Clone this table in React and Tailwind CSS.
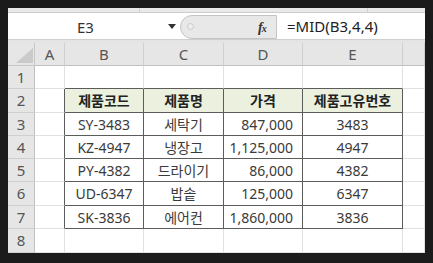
const cols = [
  { key: "A", w: "w-[30px]" },
  { key: "B", w: "w-[79px]" },
  { key: "C", w: "w-[80px]" },
  { key: "D", w: "w-[79px]" },
  { key: "E", w: "w-[100px]" },
  { key: "F", w: "w-[22px]" },
];

const rowH = ["h-[23px]", "h-[24px]", "h-[23px]", "h-[23px]", "h-[23px]", "h-[24px]", "h-[23px]", "h-[24px]"];

const data = [
  ["제품코드", "제품명", "가격", "제품고유번호"],
  ["SY-3483", "세탁기", "847,000", "3483"],
  ["KZ-4947", "냉장고", "1,125,000", "4947"],
  ["PY-4382", "드라이기", "86,000", "4382"],
  ["UD-6347", "밥솥", "125,000", "6347"],
  ["SK-3836", "에어컨", "1,860,000", "3836"],
];

function Cell({ r, c, w }) {
  // r: 1..8, c: 0..5 (A..F)
  const inTable = r >= 2 && r <= 7 && c >= 1 && c <= 4;
  const value = inTable ? data[r - 2][c - 1] : "";
  const head = r === 2 && inTable;

  let right = "border-r-[#e1e1e1]";
  let bottom = "border-b-[#e1e1e1]";
  if (inTable) {
    right = "border-r-[#5c5c5c]";
    bottom = "border-b-[#5c5c5c]";
  }
  if (c === 0 && r >= 2 && r <= 7) right = "border-r-[#5c5c5c]";
  if (r === 1 && c >= 1 && c <= 4) bottom = "border-b-[#5c5c5c]";

  const align = c === 3 && !head ? "justify-end pr-[9px]" : "justify-center";

  return (
    <div
      className={`${w} h-full shrink-0 flex items-center border-r border-b ${right} ${bottom} ${align} ${
        head ? "bg-[#ebf1de] font-bold text-[#222]" : "text-[#3a3a3a]"
      }`}
    >
      {value}
    </div>
  );
}

export default function App() {
  return (
    <div className="w-[433px] h-[263px] bg-[#1b1b1b] pt-[8px] pl-[8px] overflow-hidden font-['Noto_Sans','Noto_Sans_CJK_KR',sans-serif]">
      <div className="w-[417px] h-[245px] bg-white flex flex-col overflow-hidden">
        {/* ribbon remnant */}
        <div className="h-[5px] flex bg-[#e9e9e9] border-b border-[#cdcdcd]">
          <div className="w-[132px] border-r border-[#d0d0d0]" />
          <div className="w-[228px] border-r border-[#d0d0d0]" />
        </div>

        {/* name box + formula bar */}
        <div className="h-[26px] flex items-center bg-white">
          <div className="w-[172px] h-full flex items-center relative">
            <span className="absolute left-[69px] top-[3px] text-[15px] text-[#333]">E3</span>
            <svg className="absolute left-[160px] top-[11px]" width="8" height="5" viewBox="0 0 8 5">
              <path d="M0 0h8L4 5z" fill="#333" />
            </svg>
          </div>
          <div className="w-[97px] h-[24px] mt-[2px] flex items-center bg-[#e8e8e8] border border-[#c4c4c4] rounded-l-[12px] relative">
            <span className="absolute left-[6px] top-[7px] w-[7px] h-[7px] rounded-full border border-[#c9c9c9] bg-[#eeeeee]" />
            <span className="absolute left-[77px] top-[1px] font-['Liberation_Serif',serif] italic font-bold text-[14px] text-[#333] tracking-[-1px]">
              f<span className="text-[10px]">x</span>
            </span>
          </div>
          <div className="flex-1 h-full flex items-center pl-[10px] text-[15px] text-[#222]">=MID(B3,4,4)</div>
        </div>

        {/* gap band */}
        <div className="h-[4px] bg-[#e4e4e4] border-t border-[#cfcfcf]" />

        {/* column headers */}
        <div className="h-[23px] flex bg-[#e6e6e6] text-[15px] text-[#555]">
          <div className="w-[27px] h-full shrink-0 border-r border-b border-[#c8c8c8] relative">
            <svg className="absolute left-[8px] top-[5px]" width="17" height="15" viewBox="0 0 17 15">
              <path d="M17 0V15H0z" fill="#cacaca" />
            </svg>
          </div>
          {cols.map((c) => (
            <div
              key={c.key}
              className={`${c.w} h-full shrink-0 flex items-center justify-center border-r border-b border-r-[#cfcfcf] border-b-[#c0c0c0]`}
            >
              {c.key !== "F" ? c.key : ""}
            </div>
          ))}
        </div>

        {/* rows */}
        {rowH.map((h, i) => {
          const r = i + 1;
          return (
            <div key={r} className={`${h} shrink-0 flex text-[14px]`}>
              <div className="w-[27px] h-full shrink-0 flex items-center justify-center bg-[#e6e6e6] border-r border-b border-r-[#c0c0c0] border-b-[#cfcfcf] text-[15px] text-[#555]">
                {r}
              </div>
              {cols.map((c, ci) => (
                <Cell key={c.key} r={r} c={ci} w={c.w} />
              ))}
            </div>
          );
        })}
      </div>
    </div>
  );
}
